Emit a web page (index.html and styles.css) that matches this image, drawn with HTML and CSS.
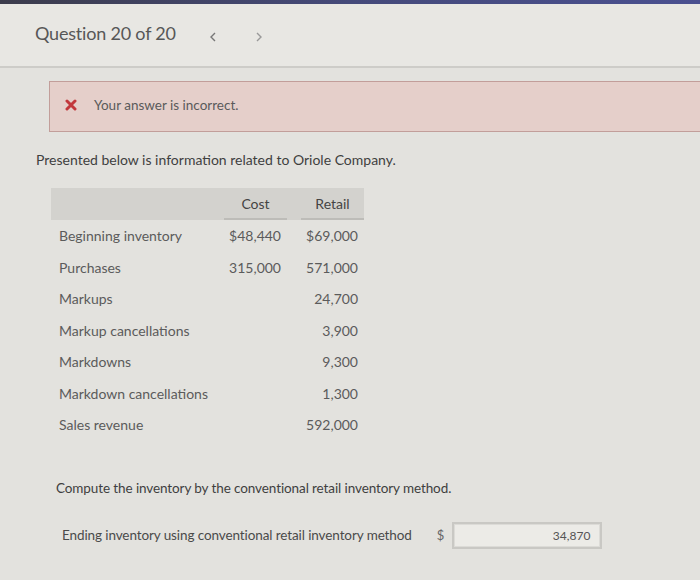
FILE: index.html
```html
<!DOCTYPE html>
<html>
<head>
<meta charset="utf-8">
<link rel="stylesheet" href="styles.css">
</head>
<body>
<div class="topbar"></div>
<header class="qhead">
  <span class="qtitle">Question 20 of 20</span>
  <span class="nav">
    <svg width="10" height="12" viewBox="0 0 10 12"><path d="M7 2 L3 6 L7 10" fill="none" stroke="#777" stroke-width="1.4"/></svg>
    <svg width="10" height="12" viewBox="0 0 10 12"><path d="M3 2 L7 6 L3 10" fill="none" stroke="#999" stroke-width="1.4"/></svg>
  </span>
</header>
<main class="content">
  <div class="alert">
    <svg class="xicon" width="12" height="12" viewBox="0 0 12 12"><path d="M2 2 L10 10 M10 2 L2 10" stroke="#c2383c" stroke-width="3" stroke-linecap="round"/></svg>
    <span>Your answer is incorrect.</span>
  </div>
  <p class="intro">Presented below is information related to Oriole Company.</p>
  <div class="tbl">
    <div class="th thlabel"></div>
    <div class="th thcol thcost">Cost</div>
    <div class="th thcol">Retail</div>

    <div class="lbl">Beginning inventory</div><div class="num">$48,440</div><div class="num">$69,000</div>
    <div class="lbl">Purchases</div><div class="num">315,000</div><div class="num">571,000</div>
    <div class="lbl">Markups</div><div class="num"></div><div class="num">24,700</div>
    <div class="lbl">Markup cancellations</div><div class="num"></div><div class="num">3,900</div>
    <div class="lbl">Markdowns</div><div class="num"></div><div class="num">9,300</div>
    <div class="lbl">Markdown cancellations</div><div class="num"></div><div class="num">1,300</div>
    <div class="lbl">Sales revenue</div><div class="num"></div><div class="num">592,000</div>
  </div>
  <p class="compute">Compute the inventory by the conventional retail inventory method.</p>
  <div class="answer">
    <span class="alabel">Ending inventory using conventional retail inventory method</span>
    <span class="dollar">$</span>
    <span class="inputbox">34,870</span>
  </div>
</main>
</body>
</html>
```

FILE: styles.css
```css
html, body {
  margin: 0;
  padding: 0;
}
body {
  width: 700px;
  height: 580px;
  overflow: hidden;
  background: #e3e2de;
  font-family: Lato, "Open Sans", sans-serif;
  color: #555;
}
.topbar {
  height: 4px;
  background: linear-gradient(90deg, #3c3c4c 0%, #454a7a 50%, #4a5090 100%);
}
.qhead {
  height: 62px;
  display: flex;
  align-items: center;
  padding-left: 35px;
  background: #e8e7e3;
  border-bottom: 2px solid #cdccc8;
}
.qtitle {
  font-size: 18px;
  color: #575757;
  letter-spacing: -0.2px;
  margin-top: -4px;
}
.nav {
  display: flex;
  gap: 36px;
  margin-left: 32px;
  margin-top: 4px;
}
.content {
  padding-left: 49px;
}
.alert {
  margin-top: 13px;
  height: 51px;
  box-sizing: border-box;
  border: 1px solid #c29e9a;
  border-right: none;
  background: #e5cfca;
  display: flex;
  align-items: center;
  padding-left: 15px;
  padding-bottom: 3px;
  font-size: 13.5px;
  color: #5a5a5a;
}
.xicon {
  margin-right: 17px;
}
.intro {
  margin: 20px 0 0 -13px;
  font-size: 14px;
  color: #3f3f3f;
  line-height: 16px;
}
.tbl {
  margin-top: 20px;
  margin-left: 2px;
  display: grid;
  grid-template-columns: 159px 63px 63px;
  grid-template-rows: 32px;
  column-gap: 14px;
  grid-auto-rows: 31.5px;
  width: 313px;
  font-size: 14px;
  color: #5b5b5b;
}
.th {
  background: #d3d2ce;
  height: 32px;
  box-sizing: border-box;
  display: flex;
  align-items: center;
  justify-content: center;
  color: #444;
}
.thlabel {
  margin-right: -14px;
}
.thcol {
  border-bottom: 2px solid #bdbcb8;
}
.thcost {
  position: relative;
  margin-right: -14px;
  padding-right: 14px;
  border-bottom: none;
  padding-bottom: 2px;
}
.thcost::after {
  content: "";
  position: absolute;
  left: 0;
  bottom: 0;
  width: 63px;
  height: 2px;
  background: #bdbcb8;
}
.lbl {
  display: flex;
  align-items: center;
  padding-left: 8px;
}
.num {
  display: flex;
  align-items: center;
  justify-content: flex-end;
  padding-right: 6px;
}
.compute {
  margin: 39px 0 0 7px;
  font-size: 13.5px;
  color: #3f3f3f;
  letter-spacing: -0.1px;
  line-height: 16px;
}
.answer {
  margin-top: 26px;
  margin-left: 13px;
  display: flex;
  align-items: center;
}
.alabel {
  font-size: 13.5px;
  color: #4a4a4a;
  letter-spacing: -0.1px;
}
.dollar {
  margin-left: 25px;
  font-size: 13px;
  color: #666;
}
.inputbox {
  margin-left: 8px;
  width: 136px;
  height: 23px;
  border: 2px solid #c9c8c4;
  outline: 1px solid #dcdbd7;
  outline-offset: -3px;
  background: #ecebe7;
  display: flex;
  align-items: center;
  justify-content: flex-end;
  padding-right: 10px;
  font-size: 12px;
  color: #555;
}
```
